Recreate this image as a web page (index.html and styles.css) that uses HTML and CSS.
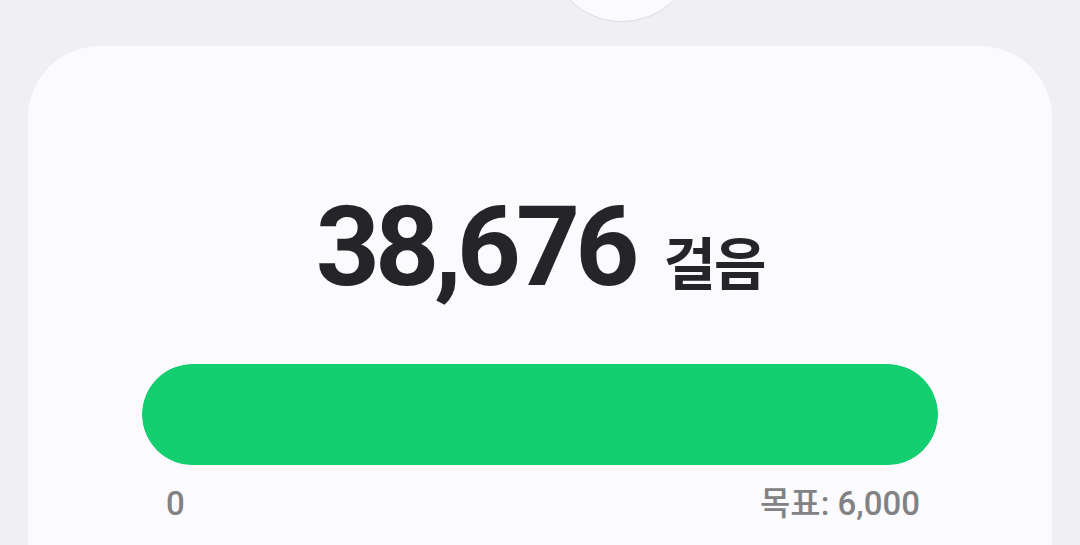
FILE: index.html
```html
<!DOCTYPE html>
<html lang="ko">
<head>
    <meta charset="UTF-8">
    <meta name="viewport" content="width=device-width, initial-scale=1.0">
    <title>걸음 수</title>
    <link rel="stylesheet" href="styles.css">
</head>
<body>
    <div class="avatar"></div>
    <div class="card">
        <div class="steps">
            <span class="steps-count">38,676</span>
            <span class="steps-unit">걸음</span>
        </div>
        <div class="progress">
            <div class="progress-fill" style="width: 100%"></div>
        </div>
        <div class="progress-labels">
            <span>0</span>
            <span>목표: 6,000</span>
        </div>
    </div>
</body>
</html>
```

FILE: styles.css
```css
body {
    margin: 0;
    background-color: #f0f0f2;
    font-family: Roboto, "Noto Sans CJK KR", sans-serif;
    color: #252528;
    overflow: hidden;
}
.avatar {
    position: absolute;
    left: 548px;
    top: -126px;
    width: 148px;
    height: 148px;
    border-radius: 50%;
    background-color: #fbfbfd;
    border: 1px solid #dedee0;
    box-sizing: border-box;
}
.card {
    margin: 46px 28px 0;
    min-height: 600px;
    background-color: #fbfbfd;
    border-radius: 72px;
    padding: 145px 114px 0;
}
.steps {
    display: flex;
    justify-content: center;
    align-items: baseline;
    gap: 29px;
}
.steps-count {
    font-size: 112px;
    line-height: 1;
    font-weight: 700;
    letter-spacing: -5px;
}
.steps-unit {
    font-family: "Noto Sans CJK KR", sans-serif;
    font-size: 57px;
    font-weight: 700;
    letter-spacing: -2px;
}
.progress {
    margin-top: 61px;
    height: 101px;
    border-radius: 51px;
    background-color: #e4e4e8;
    overflow: hidden;
}
.progress-fill {
    height: 100%;
    background-color: #13cf6f;
    border-radius: 51px;
}
.progress-labels {
    display: flex;
    justify-content: space-between;
    margin-top: 19px;
    padding: 0 18px 0 24px;
    font-size: 33px;
    line-height: 1.2;
    font-weight: 500;
    color: #828284;
}
```
